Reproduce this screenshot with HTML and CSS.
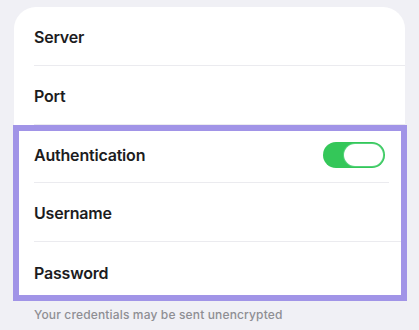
FILE: index.html
```html
<!DOCTYPE html>
<html lang="en">
<head>
  <meta charset="UTF-8">
  <meta name="viewport" content="width=device-width, initial-scale=1.0">
  <title>Mail Server</title>
  <link rel="stylesheet" href="styles.css">
</head>
<body>
  <div class="card">
    <div class="row"><span class="label">Server</span></div>
    <div class="row"><span class="label">Port</span></div>
    <div class="group">
      <div class="row">
        <span class="label">Authentication</span>
        <span class="toggle"><span class="knob"></span></span>
      </div>
      <div class="row row-short"><span class="label">Username</span></div>
      <div class="row"><span class="label">Password</span></div>
    </div>
  </div>
  <p class="footnote">Your credentials may be sent unencrypted</p>
</body>
</html>
```

FILE: styles.css
```css
body {
  font-family: Inter, "Noto Sans", sans-serif;
  background-color: #f0f0f5;
  margin: 0;
  padding: 7px 14px 0 14px;
  color: #1c1c1e;
}

.card {
  width: 391px;
  background-color: #fff;
  border-radius: 22px 22px 0 0;
}

.row {
  height: 58.8px;
  display: flex;
  align-items: center;
  justify-content: space-between;
  margin-left: 20px;
  padding-right: 20px;
  padding-top: 2px;
  box-sizing: border-box;
  border-bottom: 1px solid #ebebef;
}

.label {
  font-size: 16px;
  font-weight: 600;
  letter-spacing: -0.2px;
}

.group {
  margin: 0 -2px 0 -1px;
  outline: 6px solid #a194e7;
  outline-offset: -6px;
}

.group .row {
  margin-left: 21px;
  padding-right: 22px;
}

.group .row:last-child {
  border-bottom: none;
}

.group .row:first-child {
  border-bottom: none;
  position: relative;
}

.group .row:first-child::after {
  content: "";
  position: absolute;
  left: 0;
  right: 18px;
  bottom: 0;
  border-bottom: 1px solid #ebebef;
}

.toggle {
  width: 62px;
  height: 26px;
  border-radius: 13px;
  background-color: #34c759;
  display: flex;
  justify-content: flex-end;
  align-items: center;
  padding: 0 2px;
  box-sizing: border-box;
}

.knob {
  width: 39px;
  height: 22px;
  border-radius: 11px;
  background-color: #fff;
  box-shadow: 0 0 0 1px #55d27a;
}

.footnote {
  margin: 6px 0 0 20px;
  font-size: 12px;
  font-weight: 500;
  letter-spacing: 0.15px;
  color: #8e8e93;
}
```
